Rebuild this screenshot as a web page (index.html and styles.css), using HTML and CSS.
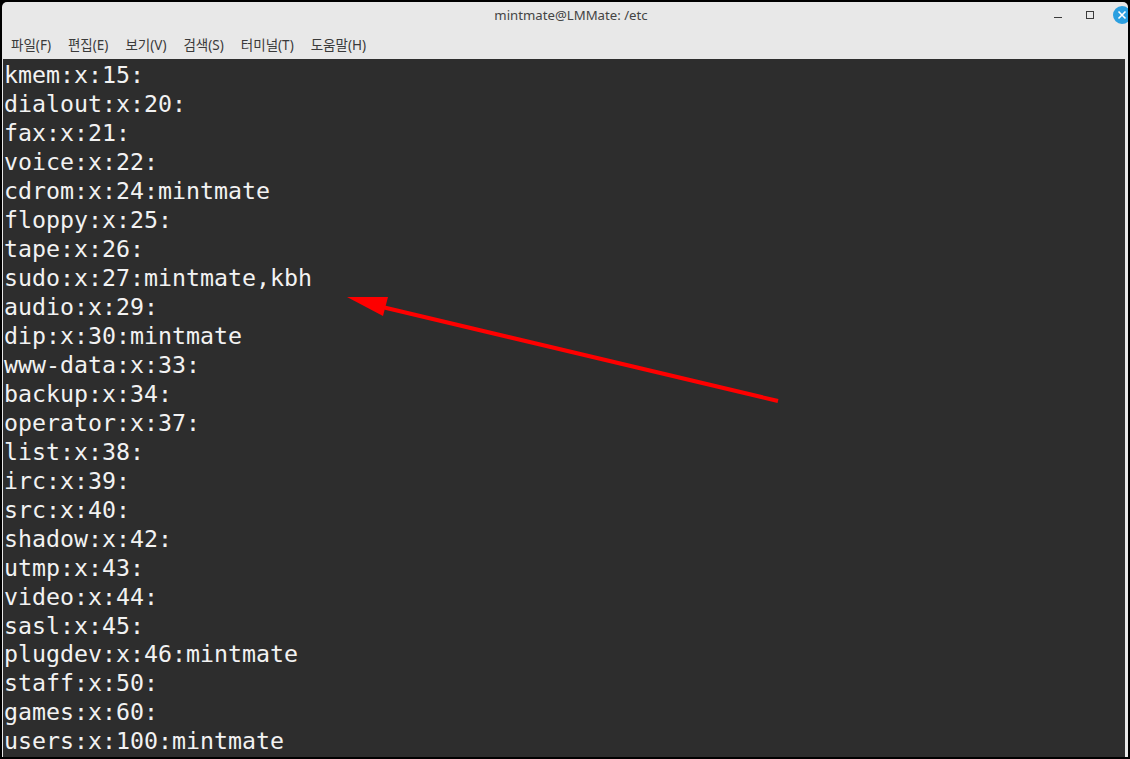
FILE: index.html
```html
<!DOCTYPE html>
<html lang="ko">
<head>
<meta charset="utf-8">
<title>mintmate@LMMate: /etc</title>
<link rel="stylesheet" href="styles.css">
</head>
<body>
<div class="window">
  <header class="titlebar">
    <div class="title">mintmate@LMMate: /etc</div>
    <div class="controls">
      <svg class="ctl" width="10" height="10" viewBox="0 0 10 10"><path d="M1 7.5H9" stroke="#3a3a3a" stroke-width="1"/></svg>
      <svg class="ctl" width="10" height="10" viewBox="0 0 10 10"><rect x="1.5" y="1.5" width="7" height="7" fill="none" stroke="#3a3a3a" stroke-width="1"/></svg>
      <svg class="close" width="18" height="18" viewBox="0 0 18 18"><circle cx="9" cy="9" r="9" fill="#2a9fe0"/><path d="M5.5 5.5L12.5 12.5M12.5 5.5L5.5 12.5" stroke="#fff" stroke-width="1.6"/></svg>
    </div>
  </header>
  <nav class="menubar">
    <span class="menu">파일(F)</span>
    <span class="menu">편집(E)</span>
    <span class="menu">보기(V)</span>
    <span class="menu">검색(S)</span>
    <span class="menu">터미널(T)</span>
    <span class="menu">도움말(H)</span>
  </nav>
  <main class="terminal">
<div class="line">kmem:x:15:</div>
<div class="line">dialout:x:20:</div>
<div class="line">fax:x:21:</div>
<div class="line">voice:x:22:</div>
<div class="line">cdrom:x:24:mintmate</div>
<div class="line">floppy:x:25:</div>
<div class="line">tape:x:26:</div>
<div class="line">sudo:x:27:mintmate,kbh</div>
<div class="line">audio:x:29:</div>
<div class="line">dip:x:30:mintmate</div>
<div class="line">www-data:x:33:</div>
<div class="line">backup:x:34:</div>
<div class="line">operator:x:37:</div>
<div class="line">list:x:38:</div>
<div class="line">irc:x:39:</div>
<div class="line">src:x:40:</div>
<div class="line">shadow:x:42:</div>
<div class="line">utmp:x:43:</div>
<div class="line">video:x:44:</div>
<div class="line">sasl:x:45:</div>
<div class="line">plugdev:x:46:mintmate</div>
<div class="line">staff:x:50:</div>
<div class="line">games:x:60:</div>
<div class="line">users:x:100:mintmate</div>
    <svg class="arrow" width="440" height="120" viewBox="340 290 440 120">
      <path d="M778 401L378 306" stroke="#fe0000" stroke-width="4" fill="none"/>
      <path d="M347 297L388 297L383 316Z" fill="#fe0000"/>
    </svg>
  </main>
</div>
</body>
</html>
```

FILE: styles.css
```css
html, body {
  margin: 0;
  padding: 0;
  height: 100%;
  background: #000;
  overflow: hidden;
}
body {
  padding: 2px;
  box-sizing: border-box;
}
.window {
  width: 1126px;
  height: 755px;
  background: #e8e8e8;
  border-radius: 5px 5px 0 0;
  display: flex;
  flex-direction: column;
  overflow: hidden;
  font-family: "Noto Sans", "Noto Sans CJK KR", sans-serif;
  color: #3a3a3a;
}
.titlebar {
  position: relative;
  height: 31px;
  flex: none;
  display: flex;
  align-items: center;
  justify-content: center;
}
.title {
  font-size: 13.2px;
  color: #444;
  margin-left: 12px;
  margin-top: -5px;
}
.controls {
  position: absolute;
  right: -3px;
  top: 4px;
  display: flex;
  align-items: center;
}
.ctl { flex: none; margin-right: 22px; }
.ctl + .ctl { margin-right: 18px; }
.close { flex: none; }
.menubar {
  height: 26px;
  flex: none;
  display: flex;
  align-items: center;
  gap: 17px;
  padding: 0 0 4px 9px;
  box-sizing: border-box;
  font-size: 13.5px;
}
.terminal {
  position: relative;
  flex: 1;
  background: #2d2d2d;
  color: #f2f2f2;
  font-family: "DejaVu Sans Mono", monospace;
  font-size: 23.25px;
  line-height: 28.96px;
  padding: 2.4px 0 0 1px;
  margin: 0 3px 0 1px;
  overflow: hidden;
}
.line { white-space: pre; height: 28.96px; }
.arrow {
  position: absolute;
  left: 337px;
  top: 231px;
}
```
